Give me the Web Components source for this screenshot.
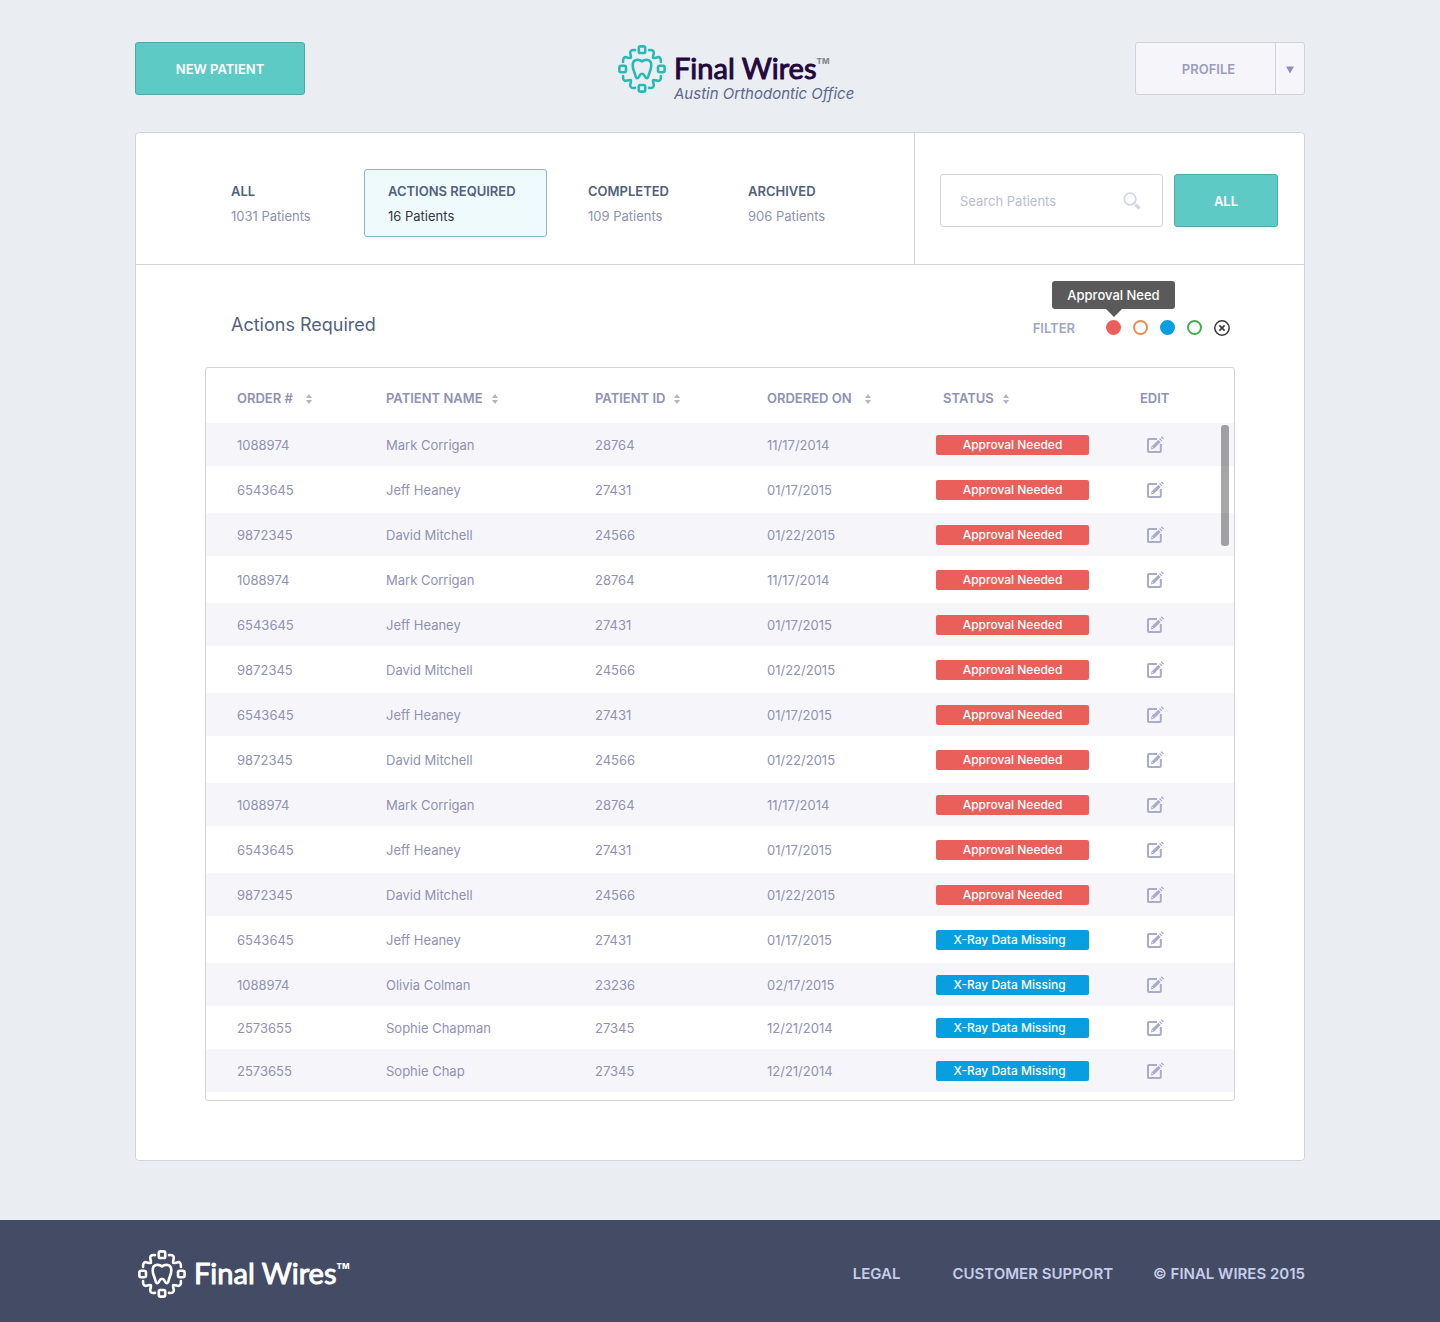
<!DOCTYPE html>
<html lang="en">
<head>
<meta charset="utf-8">
<meta name="viewport" content="width=device-width, initial-scale=1">
<title>Final Wires – Actions Required</title>
<style>
  html { min-height: 100%; background: #eaeef3; }
  body {
    margin: 0;
    font-family: Inter, "Liberation Sans", sans-serif;
    font-size: 13px;
    line-height: 20px;
    color: #8f91b5;
    --teal: #5ecac5;
    --teal-edge: #4fa9a8;
    --line: #d0d4dd;
    --ink: #535f80;
    --muted: #8f91b5;
    --red: #eb5f5a;
    --blue: #079fe0;
  }
</style>
</head>
<body>
<fw-app></fw-app>

<script>
const define = (name, html, setup) => {
  const template = document.createElement('template');
  template.innerHTML = html;
  customElements.define(name, class extends HTMLElement {
    constructor() {
      super();
      this.attachShadow({ mode: 'open' }).append(template.content.cloneNode(true));
    }
    connectedCallback() {
      if (setup && !this.ready) { this.ready = true; setup(this, this.shadowRoot); }
    }
  });
};

/* Solid call-to-action button */
define('fw-button', `
  <style>
    :host { display: block; }
    button {
      box-sizing: border-box; width: 100%; height: 53px; padding: 0;
      border: 1px solid var(--teal-edge); border-radius: 3px;
      background: var(--teal); color: #fff;
      font: 600 13px/20px Inter, sans-serif; cursor: pointer;
    }
  </style>
  <button type="button"><slot></slot></button>
`);

/* Split button: label plus drop-down arrow */
define('fw-profile', `
  <style>
    :host { display: block; }
    div {
      box-sizing: border-box; display: flex; height: 53px;
      border: 1px solid #cdd1e0; border-radius: 3px; background: #f6f6fa;
    }
    button {
      border: 0; padding: 0; background: none; color: #9a9cbd;
      font: 600 13px/20px Inter, sans-serif; cursor: pointer;
    }
    .label { flex: 1; padding-left: 6px; }
    .more { width: 29px; border-left: 1px solid #cdd1e0; display: grid; place-items: center; padding-top: 3px; }
    svg { display: block; fill: #8c90b8; }
  </style>
  <div>
    <button class="label" type="button"><slot></slot></button>
    <button class="more" type="button" aria-label="Profile menu"><svg width="8" height="8" viewBox="0 0 8 8"><path d="M0 0.5H8L4 7.5Z"/></svg></button>
  </div>
`);

/* Gear-like ring of wires around a tooth, with the word mark */
define('fw-logo', `
  <style>
    :host { display: flex; gap: 8px; color: #23083d; --mark: #2abab5; --tm: #8b8b90; }
    :host([inverse]) { color: #fff; --mark: #fff; --tm: #fff; }
    svg { flex: none; display: block; fill: none; stroke: var(--mark); stroke-width: 2.6; stroke-linecap: round; stroke-linejoin: round; }
    .words { padding-top: 5px; white-space: nowrap; }
    .name { display: flex; align-items: flex-start; font: 400 29px/35px Lato, sans-serif; -webkit-text-stroke: 1px currentColor; }
    sup { font: 800 8px/10px Inter, sans-serif; color: var(--tm); padding-top: 6px; -webkit-text-stroke: 0; }
    ::slotted(*) { display: block; font: italic 400 15px/18px Inter, sans-serif; color: #5d6888; }
  </style>
  <svg width="48" height="48" viewBox="-24 -24 48 48" aria-hidden="true">
    <g id="q">
      <rect x="-3.2" y="-22.6" width="6.4" height="6.6" rx="1.6"/>
      <path d="M-7-18.9C-11.2-19.4-12.4-17.6-11.6-14.8C-10.4-10.4-10.4-10.4-14.8-11.6C-17.6-12.4-19.4-11.2-18.9-7"/>
    </g>
    <use href="#q" transform="rotate(90)"/>
    <use href="#q" transform="rotate(180)"/>
    <use href="#q" transform="rotate(270)"/>
    <path d="M0-7.6C-3-9.9-9.3-10.3-9.3-3.8C-9.3.8-7.3 3-6.6 6.6C-6.1 9.8-4.2 9.8-3.3 8C-2.2 6-1.7 4.8 0 4.8C1.7 4.8 2.2 6 3.3 8C4.2 9.8 6.1 9.8 6.6 6.6C7.3 3 9.3.8 9.3-3.8C9.3-10.3 3-9.9 0-7.6Z"/>
  </svg>
  <div class="words">
    <div class="name"><span>Final Wires</span><sup>TM</sup></div>
    <slot></slot>
  </div>
`);

define('fw-tab', `
  <style>
    :host { display: block; }
    button {
      box-sizing: border-box; width: 100%; padding: 9px 0 7px 23px; text-align: left;
      border: 1px solid transparent; border-radius: 3px; background: none;
      font: 400 13px/25px Inter, sans-serif; color: var(--muted); white-space: nowrap; cursor: pointer;
    }
    strong { display: block; font-weight: 600; color: var(--ink); }
    span { display: block; }
    :host([selected]) button { background: #effafd; border-color: #8ab6c6; color: #33373d; }
  </style>
  <button type="button"><strong><slot></slot></strong><span><slot name="count"></slot></span></button>
`);

define('fw-search', `
  <style>
    :host { display: block; }
    label {
      box-sizing: border-box; display: flex; align-items: center; height: 53px;
      padding: 0 21px 0 19px; border: 1px solid var(--line); border-radius: 3px; background: #fff;
    }
    input {
      flex: 1; min-width: 0; border: 0; padding: 0; outline: 0; background: none;
      font: 400 13px/20px Inter, sans-serif; color: var(--ink);
    }
    input::placeholder { color: #b9bdcf; opacity: 1; }
    svg { display: block; flex: none; fill: none; stroke: #d3d7e3; }
  </style>
  <label>
    <input type="search" placeholder="Search Patients" aria-label="Search Patients">
    <svg width="18" height="18" viewBox="0 0 18 18"><circle cx="7" cy="7" r="5.8" stroke-width="1.7"/><path d="M10.8 10.8L12.5 12.5" stroke-width="1.6"/><path d="M12.6 12.6L16.6 16.6" stroke-width="3.4"/></svg>
  </label>
`);

define('fw-tooltip', `
  <style>
    :host {
      position: absolute; left: -54px; bottom: calc(100% + 11px);
      width: 123px; text-align: center; border-radius: 3px; background: #5a5a5a; color: #fff;
      font: 500 13px/28px Inter, sans-serif; white-space: nowrap;
    }
    :host::after {
      content: ""; position: absolute; left: 50%; top: 100%; margin-left: -8px;
      border: 8px solid transparent; border-top-color: #5a5a5a; border-bottom: 0;
    }
  </style>
  <slot></slot>
`);

define('fw-filters', `
  <style>
    :host { display: flex; align-items: center; }
    .label { font-weight: 600; color: #a3a5c6; margin-right: 31px; }
    .dots { display: flex; align-items: center; gap: 12px; }
    .dot { position: relative; display: flex; }
    button { box-sizing: border-box; width: 15px; height: 15px; padding: 0; border: 2px solid var(--c); border-radius: 50%; background: none; cursor: pointer; }
    button.full { background: var(--c); }
    button.clear { width: 16px; height: 16px; border: 0; }
    svg { display: block; fill: none; stroke: #38383a; }
  </style>
  <span class="label">FILTER</span>
  <div class="dots">
    <div class="dot"><button class="full" style="--c:var(--red)" type="button" aria-label="Red"></button><fw-tooltip>Approval Need</fw-tooltip></div>
    <div class="dot"><button style="--c:#ea8b55" type="button" aria-label="Orange"></button></div>
    <div class="dot"><button class="full" style="--c:var(--blue)" type="button" aria-label="Blue"></button></div>
    <div class="dot"><button style="--c:#42b04c" type="button" aria-label="Green"></button></div>
    <div class="dot"><button class="clear" type="button" aria-label="Clear"><svg width="16" height="16" viewBox="0 0 16 16"><circle cx="8" cy="8" r="7.2" stroke-width="1.5"/><path d="M5.4 5.4L10.6 10.6M10.6 5.4L5.4 10.6" stroke-width="1.6"/></svg></button></div>
  </div>
`);

define('fw-status', `
  <style>
    :host {
      box-sizing: border-box; display: block; width: 153px; border-radius: 2px; text-align: center;
      background: var(--red); color: #fff; font: 500 12px/20px Inter, sans-serif; white-space: nowrap;
    }
    :host([kind="missing"]) { background: var(--blue); padding-right: 6px; }
  </style>
  <slot></slot>
`);

define('fw-edit', `
  <style>
    :host { display: block; width: 30px; }
    button { display: flex; justify-content: center; width: 100%; padding: 0; border: 0; background: none; cursor: pointer; }
    svg { display: block; }
  </style>
  <button type="button" aria-label="Edit order"><svg width="18" height="18" viewBox="0 0 18 18">
    <path d="M11 3H2.9Q2 3 2 3.9V15.1Q2 16 2.9 16H13.9Q14.8 16 14.8 15.1V8" fill="none" stroke="#a9abca" stroke-width="2"/>
    <path d="M4.8 13.4L5.8 10.2L12.3 3.7L14.7 6.1L8.2 12.6Z" fill="#a9abca"/>
    <path d="M13.1 2.9L14 2L16.4 4.4L15.5 5.3ZM14.8 1.2L15.7 .3L18 2.6L17.2 3.6Z" fill="#a9abca"/>
    <path d="M6.2 11.2L7.2 12.2" stroke="#fff" stroke-width=".8"/>
  </svg></button>
`);

const people = {
  mark:   ['1088974', 'Mark Corrigan', '28764', '11/17/2014'],
  jeff:   ['6543645', 'Jeff Heaney', '27431', '01/17/2015'],
  david:  ['9872345', 'David Mitchell', '24566', '01/22/2015'],
  olivia: ['1088974', 'Olivia Colman', '23236', '02/17/2015'],
  sophie: ['2573655', 'Sophie Chapman', '27345', '12/21/2014'],
  chap:   ['2573655', 'Sophie Chap', '27345', '12/21/2014']
};
const approval = ['mark', 'jeff', 'david', 'mark', 'jeff', 'david', 'jeff', 'david', 'mark', 'jeff', 'david'];
const missing = ['jeff', 'olivia', 'sophie', 'chap'];
const columns = ['ORDER #', 'PATIENT NAME', 'PATIENT ID', 'ORDERED ON', 'STATUS'];

define('fw-orders', `
  <style>
    :host { display: block; position: relative; border: 1px solid var(--line); border-radius: 3px; padding-bottom: 8px; }
    table { width: 100%; table-layout: fixed; border-collapse: collapse; }
    th, td { padding: 0; text-align: left; vertical-align: middle; white-space: nowrap; }
    th:first-child, td:first-child { padding-left: 31px; }
    th:nth-child(5) { padding-left: 7px; }
    th { height: 50px; padding-top: 5px; font-weight: 600; }
    th button { display: flex; align-items: center; gap: 9px; padding: 0; border: 0; background: none; font: inherit; color: inherit; cursor: pointer; }
    th:nth-child(3n + 1) button { gap: 13px; }
    th svg { display: block; margin-top: 2px; fill: #b4b4c8; }
    td { height: 43px; }
    tbody tr:nth-child(odd) { background: #f6f6fa; }
    tbody tr:nth-child(even):not(:nth-last-child(2)) td { height: 47px; }
    .c1 { width: 180px; } .c2 { width: 209px; } .c3 { width: 172px; } .c4 { width: 169px; } .c5 { width: 204px; }
    .thumb { position: absolute; top: 57px; right: 5px; width: 8px; height: 121px; border-radius: 3px; background: rgba(0, 0, 0, .35); }
  </style>
  <table>
    <colgroup><col class="c1"><col class="c2"><col class="c3"><col class="c4"><col class="c5"><col></colgroup>
    <thead><tr></tr></thead>
    <tbody></tbody>
  </table>
  <div class="thumb"></div>
`, (host, root) => {
  root.querySelector('thead tr').innerHTML = columns.map(c =>
    `<th scope="col"><button type="button">${c}<svg width="6" height="10" viewBox="0 0 6 10"><path d="M0 4L3 0L6 4ZM0 6L3 10L6 6Z"/></svg></button></th>`
  ).join('') + '<th scope="col">EDIT</th>';
  const row = (key, status) =>
    `<tr>${people[key].map(v => `<td>${v}</td>`).join('')}<td>${status}</td><td><fw-edit></fw-edit></td></tr>`;
  root.querySelector('tbody').innerHTML =
    approval.map(k => row(k, '<fw-status>Approval Needed</fw-status>')).join('') +
    missing.map(k => row(k, '<fw-status kind="missing">X-Ray Data Missing</fw-status>')).join('');
});

define('fw-header', `
  <style>
    :host { display: grid; grid-template-columns: 1fr 204px 1fr; align-items: start; padding-top: 42px; height: 90px; }
    fw-button, fw-profile { width: 170px; }
    fw-profile { justify-self: end; }
    fw-logo { padding-top: 3px; }
  </style>
  <fw-button>NEW PATIENT</fw-button>
  <fw-logo><span>Austin Orthodontic Office</span></fw-logo>
  <fw-profile>PROFILE</fw-profile>
`);

define('fw-panel', `
  <style>
    :host { display: block; border: 1px solid var(--line); border-radius: 4px; background: #fff; }
    .top { display: flex; border-bottom: 1px solid var(--line); }
    nav { flex: 1; display: grid; grid-template-columns: 140px 183px 143px 143px; column-gap: 17px; padding: 36px 0 27px 71px; }
    .find { display: flex; gap: 11px; padding: 41px 26px 37px 25px; border-left: 1px solid var(--line); }
    fw-search { width: 223px; }
    .find fw-button { width: 104px; }
    .bar { display: flex; justify-content: space-between; padding: 46px 74px 29px 95px; }
    h1 { margin: 0; font-weight: 400; font-size: 18px; line-height: 27px; color: var(--ink); }
    fw-filters { padding-top: 6px; }
    fw-orders { margin: 0 69px 59px; }
  </style>
  <div class="top">
    <nav aria-label="Patients">
      <fw-tab>ALL<span slot="count">1031 Patients</span></fw-tab>
      <fw-tab selected>ACTIONS REQUIRED<span slot="count">16 Patients</span></fw-tab>
      <fw-tab>COMPLETED<span slot="count">109 Patients</span></fw-tab>
      <fw-tab>ARCHIVED<span slot="count">906 Patients</span></fw-tab>
    </nav>
    <div class="find"><fw-search></fw-search><fw-button>ALL</fw-button></div>
  </div>
  <div class="bar"><h1>Actions Required</h1><fw-filters></fw-filters></div>
  <fw-orders></fw-orders>
`);

define('fw-footer', `
  <style>
    :host { display: block; background: #444b64; color: #c6cdea; padding: 30px 0 24px; }
    .inner { max-width: 1170px; margin: 0 auto; display: flex; justify-content: space-between; align-items: center; }
    fw-logo { padding-left: 3px; }
    .links { display: flex; gap: 40px; font-weight: 600; font-size: 15px; }
    a { color: inherit; text-decoration: none; }
    a:first-child { margin-right: 12px; }
  </style>
  <div class="inner">
    <fw-logo inverse></fw-logo>
    <div class="links"><a href="#legal">LEGAL</a><a href="#support">CUSTOMER SUPPORT</a><span>© FINAL WIRES 2015</span></div>
  </div>
`);

define('fw-app', `
  <style>
    :host { display: flex; flex-direction: column; min-height: 100vh; }
    main { width: 100%; max-width: 1170px; margin: 0 auto; flex: 1; padding-bottom: 59px; }
  </style>
  <main><fw-header></fw-header><fw-panel></fw-panel></main>
  <fw-footer></fw-footer>
`);
</script>
</body>
</html>
